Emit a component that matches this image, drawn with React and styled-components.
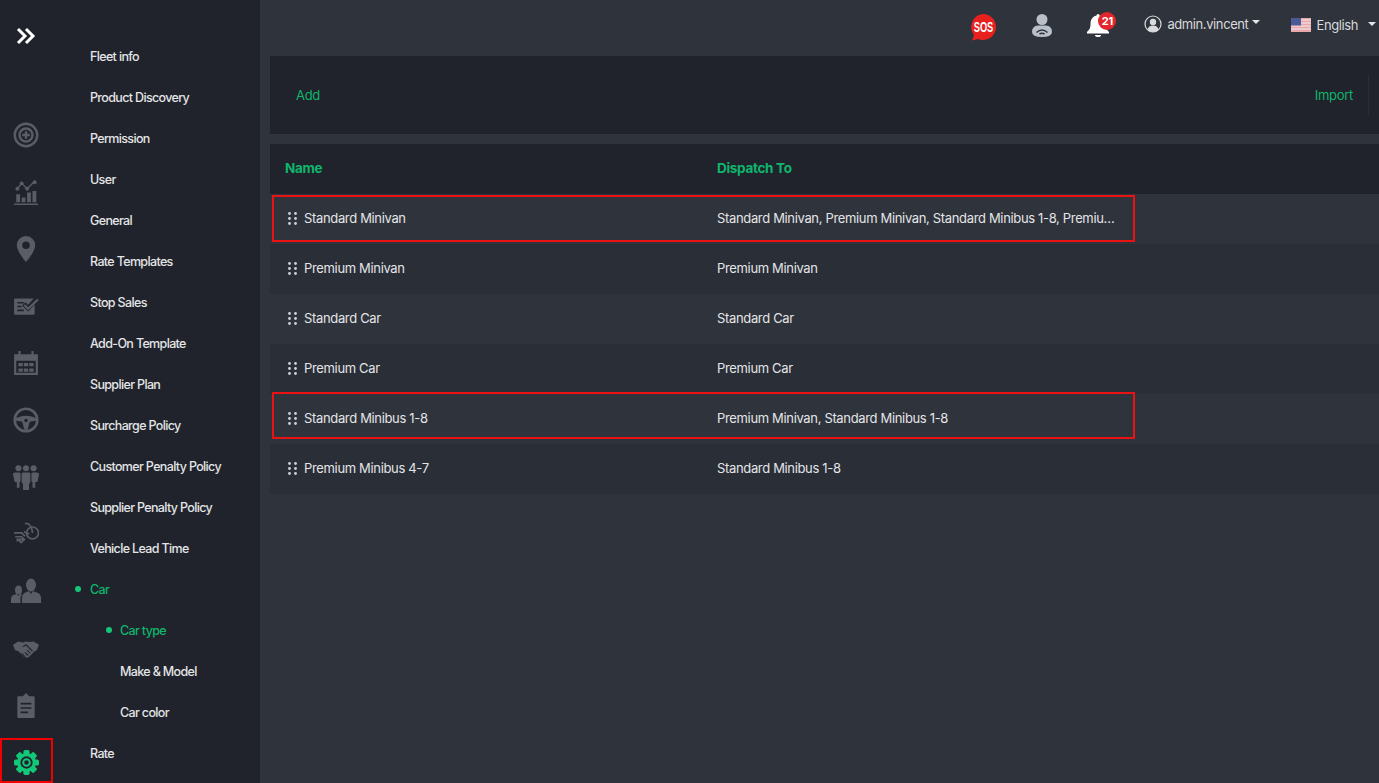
import React from 'react';
import styled, { createGlobalStyle } from 'styled-components';

const GREEN = '#0fb56c';
const ICON = '#5a5d66';

const Global = createGlobalStyle`
	html, body { margin: 0; padding: 0; background: #2f333c; }
	body { font-family: Inter, "Liberation Sans", sans-serif; }
	* { box-sizing: border-box; }
`;

const Page = styled.div`
	display: flex;
	width: 1379px;
	height: 783px;
	overflow: hidden;
	background: #2f333c;
`;
const Sidebar = styled.aside`
	display: flex;
	width: 260px;
	flex: none;
	background: #20232b;
`;
const Rail = styled.nav`
	display: flex;
	flex-direction: column;
	width: 53px;
	flex: none;
`;
const Toggle = styled.div`
	display: flex;
	justify-content: center;
	height: 107px;
	flex: none;
	padding: 26px 1px 0 0;
	border-bottom: 1px solid #22252e;
`;
const RailCell = styled.div`
	position: relative;
	display: flex;
	align-items: center;
	justify-content: center;
	height: 57px;
	flex: none;
	padding-right: 1px;
	border-bottom: 1px solid ${p => (p.$last ? 'transparent' : '#22252e')};
	color: ${p => (p.$active ? '#12c878' : ICON)};
`;
const RedFrame = styled.div`
	position: absolute;
	left: 0;
	right: 0;
	top: 4px;
	height: 45px;
	border: 2px solid #f00000;
`;
const Menu = styled.ul`
	list-style: none;
	margin: 0;
	padding: 36px 0 0 37px;
	flex: 1;
`;
const MenuItem = styled.li`
	position: relative;
	height: 41px;
	line-height: 41px;
	padding-left: ${p => (p.$sub ? '30px' : '0')};
	font-size: 12.5px;
	font-weight: 500;
	letter-spacing: -0.65px;
	color: ${p => (p.$on ? GREEN : '#e4e5e7')};
	white-space: nowrap;
	&::before {
		content: '';
		display: ${p => (p.$on ? 'block' : 'none')};
		position: absolute;
		top: 17px;
		left: ${p => (p.$sub ? '16px' : '-15px')};
		width: 6px;
		height: 6px;
		border-radius: 50%;
		background: #12c878;
	}
`;
const Main = styled.main`
	flex: 1;
	display: flex;
	flex-direction: column;
	min-width: 0;
`;
const Topbar = styled.header`
	display: flex;
	align-items: center;
	justify-content: flex-end;
	height: 56px;
	flex: none;
	padding-right: 3px;
`;
const TopIcon = styled.div`
	position: relative;
	display: flex;
	align-items: center;
	justify-content: center;
	margin-right: ${p => p.$gap}px;
	margin-top: ${p => p.$top}px;
`;
const Badge = styled.span`
	position: absolute;
	top: 0;
	left: 12px;
	width: 18px;
	height: 18px;
	line-height: 18px;
	border-radius: 50%;
	background: #e3262b;
	color: #fff;
	font-size: 11px;
	font-weight: 700;
	text-align: center;
	letter-spacing: -0.3px;
`;
const SosLabel = styled.span`
	position: absolute;
	top: 7px;
	left: 0;
	width: 28px;
	line-height: 14px;
	text-align: center;
	font-family: "Liberation Sans", sans-serif;
	font-size: 14px;
	font-weight: 700;
	color: #fff;
	transform: scaleX(0.66);
`;
const Dropdown = styled.div`
	display: flex;
	align-items: center;
	gap: ${p => p.$gap}px;
	margin-right: ${p => p.$right}px;
	margin-top: ${p => p.$top}px;
	font-size: 13px;
	letter-spacing: -0.4px;
	color: #d8dadd;
`;
const Caret = styled.i`
	width: 0;
	height: 0;
	margin-left: ${p => p.$left}px;
	margin-bottom: 3px;
	border-left: 4px solid transparent;
	border-right: 4px solid transparent;
	border-top: 4px solid #e4e5e7;
`;
const Toolbar = styled.div`
	display: flex;
	align-items: center;
	justify-content: space-between;
	height: 78px;
	margin-left: 10px;
	padding: 0 10px 0 26px;
	flex: none;
	background: #20232b;
`;
const ToolLink = styled.a`
	font-size: 13px;
	letter-spacing: -0.3px;
	color: ${GREEN};
	padding-bottom: 1px;
`;
const ImportWrap = styled.div`
	display: flex;
	align-items: center;
	height: 40px;
	padding-right: 15px;
	border-right: 1px solid #2a2d35;
`;
const Table = styled.div`
	margin: 10px 0 0 10px;
`;
const Head = styled.div`
	display: grid;
	grid-template-columns: 432px 1fr;
	align-items: center;
	height: 50px;
	padding: 0 0 2px 15px;
	background: #20232b;
	font-size: 13.5px;
	font-weight: 700;
	letter-spacing: -0.3px;
	color: ${GREEN};
`;
const Row = styled.div`
	position: relative;
	display: grid;
	grid-template-columns: 432px 398px;
	align-items: center;
	height: 50px;
	padding: 0 0 2px 15px;
	background: ${p => (p.$odd ? '#2f333c' : '#2a2e37')};
	font-size: 13px;
	letter-spacing: -0.34px;
	color: #e4e5e7;
`;
const RowFrame = styled.div`
	position: absolute;
	left: 2px;
	top: ${p => p.$top}px;
	width: 863px;
	height: 47px;
	border: 2px solid #ea1212;
`;
const NameCell = styled.div`
	display: flex;
	align-items: center;
	gap: 7px;
	padding-left: 3px;
`;
const DispatchCell = styled.div`
	overflow: hidden;
	white-space: nowrap;
	text-overflow: ellipsis;
`;
const Grip = styled.svg`
	display: block;
	flex: none;
`;

const Svg = ({ children, size = 26 }) => (
	<svg width={size} height={size} viewBox="0 0 24 24" fill="currentColor">
		{children}
	</svg>
);

const Chevrons = () => (
	<svg width="20" height="20" viewBox="0 0 20 20" fill="none" stroke="#fff" strokeWidth="3">
		<path d="M2 3l7 7-7 7M10 3l7 7-7 7" />
	</svg>
);

const railIcons = [
	<Svg key="add">
		<circle cx="12" cy="12" r="10.4" fill="none" stroke="currentColor" strokeWidth="2.2" />
		<circle cx="12" cy="12" r="6" fill="none" stroke="currentColor" strokeWidth="2.2" />
		<path d="M12 8.5v7M8.5 12h7" stroke="currentColor" strokeWidth="2.2" />
	</Svg>,
	<Svg key="chart">
		<path d="M1 22.500h22V24H1zM3 14h3.500v7.500H3zM8 17h3.500v4.500H8zM13 12.500h3.500v9H13zM18 11h3.500v10.500H18z" />
		<path d="M4 9l4-5 5 5 7-7" fill="none" stroke="currentColor" strokeWidth="1.300" />
		<circle cx="4" cy="9" r="1.800" />
		<circle cx="8" cy="4" r="1.800" />
		<circle cx="13" cy="9" r="1.800" />
		<circle cx="20" cy="3" r="1.800" />
	</Svg>,
	<Svg key="pin">
		<path fillRule="evenodd" d="M12 0a8.500 8.500 0 0 0-8.500 8.500C3.500 14.500 12 24 12 24s8.500-9.500 8.500-15.500A8.500 8.500 0 0 0 12 0zm0 5a3.500 3.500 0 1 1 0 7 3.500 3.500 0 0 1 0-7z" />
	</Svg>,
	<Svg key="check">
		<path d="M1 5h18l-5 6-2.500-2.500-3 3L14 17l6-6.500V19a1 1 0 0 1-1 1H2a1 1 0 0 1-1-1z" />
		<path d="M4 9h6M4 12.500h4M4 16h6" stroke="#20232b" strokeWidth="1.500" />
		<path d="M10.500 11l3.500 3.500L23 6" fill="none" stroke="currentColor" strokeWidth="2" />
	</Svg>,
	<Svg key="calendar">
		<path fillRule="evenodd" d="M1 4h4V1h2v3h10V1h2v3h4v19H1zm2 6v11h18V10z" />
		<path d="M5 12h4v3H5zM10 12h4v3h-4zM15 12h4v3h-4zM5 17h4v3H5zM10 17h4v3h-4zM15 17h4v3h-4z" />
	</Svg>,
	<Svg key="wheel">
		<circle cx="12" cy="12" r="10.400" fill="none" stroke="currentColor" strokeWidth="2.400" />
		<path d="M2 10.500c4-1.500 6-2.500 10-2.500s6 1 10 2.500v2l-6.500 1-2 7.500h-3l-2-7.500-6.500-1z" />
		<circle cx="12" cy="12.500" r="1.600" fill="#20232b" />
	</Svg>,
	<Svg key="team">
		<circle cx="5" cy="4" r="2.800" />
		<circle cx="12" cy="4" r="2.800" />
		<circle cx="19" cy="4" r="2.800" />
		<path d="M0 9.500q0-1.700 2-1.700h4l1 1v7l-1 1V22H3.500v-5.500H1.500zM24 9.500q0-1.700-2-1.700h-4l-1 1v7l1 1V22h2.500v-5.500h2zM8 9q0-1.200 1.500-1.200h5Q16 7.800 16 9v8l-1.200 1V24H9.200v-6L8 17z" />
	</Svg>,
	<Svg key="bike">
		<g fill="none" stroke="currentColor" strokeWidth="1.500">
			<circle cx="18" cy="11" r="5.500" />
			<path d="M11 2.500q3-1 5 2t2 6.500M1 11h7l3 3M2 14.500h6l2.500 2.500-3 3-3-3h5M3 18h3M10 10l5 2" />
		</g>
	</Svg>,
	<svg key="people" width="32" height="26" viewBox="0 0 32 26" fill="currentColor">
		<ellipse cx="21" cy="7" rx="5" ry="6.500" />
		<path d="M12 25v-5q0-5 5-6l2-1 2 3 2-3 2 1q6 1 6 6v5zM1 25v-4q0-4 4-4.500l2-.5 1.500 2 1.500-2 2 .5-1.500 3v5.500z" />
		<ellipse cx="8.500" cy="12" rx="3.500" ry="4.500" />
	</svg>,
	<Svg key="hands">
		<path d="M0 9l5-3 4 1 3-1 3 .5 4-.5 5 3-2 5-2 1-5 5-2 1-3-1-5-5-3-1z" />
		<path d="M9 11l3-2 6 6M11 20l-3-3M14 19l-3-3M16 17l-3-3" fill="none" stroke="#20232b" strokeWidth="1" />
	</Svg>,
	<Svg key="clip">
		<path fillRule="evenodd" d="M5 4h4l3-3 3 3h4a1 1 0 0 1 1 1v18a1 1 0 0 1-1 1H5a1 1 0 0 1-1-1V5a1 1 0 0 1 1-1zm2 6v1.500h10V10zm0 4v1.500h10V14zm0 4v1.500h7V18z" />
	</Svg>,
];

// 8 rounded teeth round a dark ring
const Gear = () => (
	<Svg size={25}>
		{[0, 45, 90, 135].map(a => (
			<rect key={a} x="9" y="0" width="6" height="24" rx="1.600" transform={`rotate(${a} 12 12)`} />
		))}
		<circle cx="12" cy="12" r="9" />
		<circle cx="12" cy="12" r="5" fill="none" stroke="#20232b" strokeWidth="1.800" />
		<circle cx="12" cy="12" r="2.200" fill="#20232b" />
	</Svg>
);

const menu = [
	['Fleet info'],
	['Product Discovery'],
	['Permission'],
	['User'],
	['General'],
	['Rate Templates'],
	['Stop Sales'],
	['Add-On Template'],
	['Supplier Plan'],
	['Surcharge Policy'],
	['Customer Penalty Policy'],
	['Supplier Penalty Policy'],
	['Vehicle Lead Time'],
	['Car', 'on'],
	['Car type', 'on', 'sub'],
	['Make & Model', '', 'sub'],
	['Car color', '', 'sub'],
	['Rate'],
];

const rows = [
	['Standard Minivan', 'Standard Minivan, Premium Minivan, Standard Minibus 1-8, Premium Minibus 4-7', 1],
	['Premium Minivan', 'Premium Minivan'],
	['Standard Car', 'Standard Car'],
	['Premium Car', 'Premium Car'],
	['Standard Minibus 1-8', 'Premium Minivan, Standard Minibus 1-8', -2],
	['Premium Minibus 4-7', 'Standard Minibus 1-8'],
];

const SosIcon = () => (
	<svg width="28" height="28" viewBox="0 0 28 28">
		<path d="M14 1a13 13 0 1 1-5 25l-6 1.500 2-5.500A13 13 0 0 1 14 1z" fill="#e8211f" />
	</svg>
);

const PersonIcon = () => (
	<svg width="22" height="25" viewBox="0 0 22 25" fill="#b9c0c9">
		<circle cx="11" cy="6.500" r="5.500" />
		<path d="M1 19q0-6 6-6.500h8q6 .5 6 6.500 0 5-10 5T1 19z" />
		<path d="M5.500 19.500q5.500-5 11 0M8.500 21q2.500-1.500 5 0" fill="none" stroke="#2f333c" strokeWidth="1.500" />
	</svg>
);

const BellIcon = () => (
	<svg width="24" height="26" viewBox="0 0 24 26" fill="#fff">
		<path d="M12 2q1.500 0 1.500 1.500c4 1 6 4 6 8 0 5 1 6 3.500 8.500v1.500H1V20c2.500-2.500 3.500-3.500 3.500-8.500 0-4 2-7 6-8Q10.500 2 12 2z" />
		<path d="M9 23h6a3 2 0 0 1-6 0z" />
	</svg>
);

const AvatarIcon = () => (
	<svg width="18" height="18" viewBox="0 0 18 18">
		<circle cx="9" cy="9" r="8" fill="none" stroke="#d8dadd" strokeWidth="1.200" />
		<circle cx="9" cy="7" r="3.200" fill="#d8dadd" />
		<path d="M3.500 14.500q1-4 5.500-4t5.500 4Q12.500 17 9 17t-5.500-2.500z" fill="#d8dadd" />
	</svg>
);

const FlagIcon = () => (
	<svg width="20" height="14" viewBox="0 0 20 14">
		<rect width="20" height="14" fill="#e8a7aa" />
		<path d="M0 2h20M0 5h20M0 8h20M0 11h20" stroke="#f3eeee" strokeWidth="1.100" />
		<rect width="10" height="7.500" fill="#4a5a95" />
	</svg>
);

const GripIcon = () => (
	<Grip width="9" height="13" viewBox="0 0 9 13" fill="#d0d2d6">
		{[1.500, 6.500, 11.500].map(y => (
			<g key={y}>
				<circle cx="1.500" cy={y} r="1.400" />
				<circle cx="7.500" cy={y} r="1.400" />
			</g>
		))}
	</Grip>
);

export default function App() {
	return (
		<Page>
			<Global />
			<Sidebar>
				<Rail>
					<Toggle>
						<Chevrons />
					</Toggle>
					{railIcons.map((icon, i) => (
						<RailCell key={i}>{icon}</RailCell>
					))}
					<RailCell $active $last>
						<RedFrame />
						<Gear />
					</RailCell>
				</Rail>
				<Menu>
					{menu.map(([label, on, sub]) => (
						<MenuItem key={label} $on={!!on} $sub={!!sub}>
							{label}
						</MenuItem>
					))}
				</Menu>
			</Sidebar>
			<Main>
				<Topbar>
					<TopIcon $gap={34} $top={-2}>
						<SosIcon />
						<SosLabel>SOS</SosLabel>
					</TopIcon>
					<TopIcon $gap={33} $top={-6}>
						<PersonIcon />
					</TopIcon>
					<TopIcon $gap={34} $top={-6}>
						<BellIcon />
						<Badge>21</Badge>
					</TopIcon>
					<Dropdown $gap={5} $right={31} $top={-9}>
						<AvatarIcon />
						admin.vincent
						<Caret $left={-1} />
					</Dropdown>
					<Dropdown $gap={5} $right={0} $top={-6}>
						<FlagIcon />
						English
						<Caret $left={5} />
					</Dropdown>
				</Topbar>
				<Toolbar>
					<ToolLink>Add</ToolLink>
					<ImportWrap>
						<ToolLink>Import</ToolLink>
					</ImportWrap>
				</Toolbar>
				<Table>
					<Head>
						<span>Name</span>
						<span>Dispatch To</span>
					</Head>
					{rows.map(([name, to, frameTop], i) => (
						<Row key={name} $odd={i % 2 === 0}>
							{frameTop && <RowFrame $top={frameTop} />}
							<NameCell>
								<GripIcon />
								{name}
							</NameCell>
							<DispatchCell>{to}</DispatchCell>
						</Row>
					))}
				</Table>
			</Main>
		</Page>
	);
}
